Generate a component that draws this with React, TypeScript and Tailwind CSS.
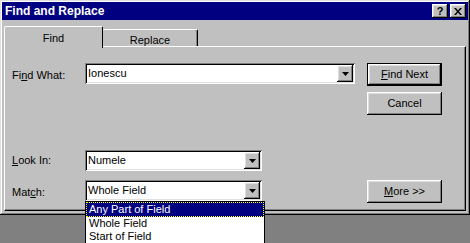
import { ReactNode } from 'react';

// Win9x-style bevels
const raised =
  'shadow-[inset_-1px_-1px_#000,inset_1px_1px_#fff,inset_-2px_-2px_#808080,inset_2px_2px_#dfdfdf]';
const sunken =
  'shadow-[inset_1px_1px_#808080,inset_-1px_-1px_#fff,inset_2px_2px_#000,inset_-2px_-2px_#dfdfdf]';

function Arrow() {
  return (
    <svg width="7" height="4" viewBox="0 0 7 4">
      <path d="M0 0h7L3.5 4z" fill="#000" />
    </svg>
  );
}

function Combo({ value, width }: { value: string; width: string }) {
  return (
    <div className={`flex h-[21px] items-center bg-white pl-[3px] pr-[2px] ${width} ${sunken}`}>
      <span className="flex-1 truncate">{value}</span>
      <div className={`flex h-[17px] w-[16px] items-center justify-center bg-[#c0c0c0] ${raised}`}>
        <Arrow />
      </div>
    </div>
  );
}

function Button({ children, isDefault }: { children: ReactNode; isDefault?: boolean }) {
  return (
    <div className={`w-[75px] ${isDefault ? 'border border-black' : ''}`}>
      <div
        className={`flex items-center justify-center bg-[#c0c0c0] ${isDefault ? 'h-[21px]' : 'h-[23px]'} ${raised}`}
      >
        {children}
      </div>
    </div>
  );
}

export default function App() {
  return (
    <div
      className="relative h-[243px] w-[470px] overflow-hidden bg-[#808080] text-[11px] text-black"
      style={{ fontFamily: '"Liberation Sans", Arial, sans-serif' }}
    >
      <div
        className={`h-[215px] bg-[#c0c0c0] p-[2px] shadow-[inset_-1px_-1px_#000,inset_1px_1px_#dfdfdf,inset_-2px_-2px_#808080,inset_2px_2px_#fff]`}
      >
        {/* Title bar */}
        <div className="flex h-[18px] items-center bg-[#000080] pl-[3px] pr-[2px]">
          <span className="flex-1 text-[12px] font-bold text-white">Find and Replace</span>
          <div className={`flex h-[14px] w-[16px] items-center justify-center bg-[#c0c0c0] text-[11px] font-bold ${raised}`}>
            ?
          </div>
          <div className={`ml-[2px] flex h-[14px] w-[16px] items-center justify-center bg-[#c0c0c0] ${raised}`}>
            <svg width="8" height="7" viewBox="0 0 8 7">
              <path d="M0 0h2l2 2.5L6 0h2L5 3.5 8 7H6L4 4.5 2 7H0l3-3.5z" fill="#000" />
            </svg>
          </div>
        </div>

        {/* Tabs */}
        <div className="flex h-[26px] items-end pl-[2px]">
          <div className="relative z-10 -mb-[2px] flex h-[22px] w-[99px] items-start justify-center rounded-t-[2px] border-l border-t border-r border-l-white border-t-white border-r-black bg-[#c0c0c0] pt-[3px]">
            Find
          </div>
          <div className="flex h-[17px] w-[95px] items-start justify-center rounded-t-[2px] border-t border-r border-t-white border-r-black pt-[2px] shadow-[inset_-1px_0_#808080]">
            Replace
          </div>
        </div>

        {/* Tab panel */}
        <div className="relative mx-[2px] h-[165px] border-l border-t border-l-white border-t-white border-r border-b border-r-black border-b-black shadow-[inset_-1px_-1px_#808080] pl-[7px] pr-[23px] pt-[16px]">
          <div className="flex items-start">
            <span className="w-[73px] pt-[4px]">
              Fi<u>n</u>d What:
            </span>
            <Combo value="Ionescu" width="w-[270px]" />
            <div className="ml-auto flex flex-col gap-[6px]">
              <Button isDefault>
                <u>F</u>ind Next
              </Button>
              <Button>Cancel</Button>
            </div>
          </div>

          <div className="mt-[35px] flex items-center">
            <span className="w-[73px]">
              <u>L</u>ook In:
            </span>
            <Combo value="Numele" width="w-[177px]" />
          </div>

          <div className="mt-[9px] flex items-start">
            <span className="w-[73px] pt-[4px]">
              Mat<u>c</u>h:
            </span>
            <Combo value="Whole Field" width="w-[177px]" />
            <div className="ml-auto">
              <Button>
                <span>
                  <u>M</u>ore &gt;&gt;
                </span>
              </Button>
            </div>
          </div>
        </div>
      </div>

      {/* Open dropdown list */}
      <div className="absolute left-[85px] top-[201px] w-[180px] border border-black bg-white text-[11px] leading-[13px]">
        <div className="border border-dotted border-[#ffff00] bg-[#000080] pl-[2px] text-white">Any Part of Field</div>
        <div className="pl-[3px]">Whole Field</div>
        <div className="pl-[3px] pb-[1px]">Start of Field</div>
      </div>
    </div>
  );
}
